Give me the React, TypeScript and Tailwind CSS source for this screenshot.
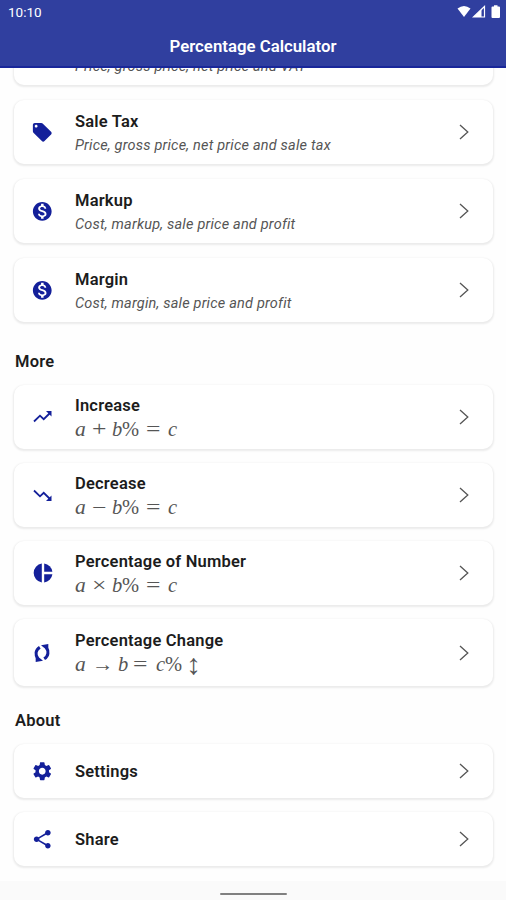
import React from 'react';
import { MdLocalOffer, MdMonetizationOn, MdSettings, MdShare } from 'react-icons/md';

type Token = { text: string; width: string; style?: string };

// Glyph slots of the formulas, one per symbol
const a: Token = { text: 'a', width: 'w-[17px]', style: 'italic scale-x-105' };
const binary = (sign: string): Token[] => [
  a,
  { text: sign, width: 'w-[20px]', style: 'scale-x-125' },
  { text: 'b', width: 'w-[10px]', style: 'italic' },
  { text: '%', width: 'w-[24px]' },
  { text: '=', width: 'w-[22px]', style: 'scale-x-125' },
  { text: 'c', width: 'w-[10px]', style: 'italic' },
];
const change: Token[] = [
  a,
  { text: '→', width: 'w-[26px]', style: 'scale-x-105' },
  { text: 'b', width: 'w-[15px]', style: 'italic' },
  { text: '=', width: 'w-[23px]', style: 'scale-x-125' },
  { text: 'c', width: 'w-[9px]', style: 'italic' },
  { text: '%', width: 'w-[21px]' },
  { text: '↕', width: 'w-[12px]', style: 'scale-y-140 scale-x-145' },
];

function Formula({ tokens }: { tokens: Token[] }) {
  return (
    <div className="flex h-[24px] font-['Liberation_Serif',serif] text-[20.5px] leading-[24px] text-[#555]">
      {tokens.map((t, i) => (
        <span key={i} className={`shrink-0 ${t.width}`}>
          <span className={`inline-block origin-left ${t.style ?? ''}`}>{t.text}</span>
        </span>
      ))}
    </div>
  );
}

function TrendIcon({ down = false }: { down?: boolean }) {
  return (
    <svg viewBox="0 0 22 22" className={`h-[22px] w-[22px] ${down ? '-scale-y-100' : ''}`}>
      <path d="M2 15.500L8 9.700L11.700 13.200L17.500 7.500" fill="none" stroke="currentColor" strokeWidth="1.800" />
      <path d="M14 5H19.500V10.500z" fill="currentColor" />
    </svg>
  );
}

function PieIcon() {
  return (
    <svg viewBox="0 0 22 22" className="h-[22px] w-[22px]" fill="currentColor">
      <path d="M9.800 1.600V20.400A9.500 9.500 0 0 1 9.800 1.600z" />
      <path d="M12.200 1.600A9.500 9.500 0 0 1 20.400 9.800H12.200z" />
      <path d="M12.200 12.200H20.400A9.500 9.500 0 0 1 12.200 20.400z" />
    </svg>
  );
}

function ChangeIcon() {
  return (
    <svg viewBox="0 0 22 22" className="mr-px h-[22px] w-[22px]">
      <g fill="none" stroke="currentColor" strokeWidth="3">
        <path d="M15.200 5.500C18 9 17.600 14 13.200 16.800" />
        <path d="M6.800 16.500C4 13 4.400 8 8.800 5.200" />
      </g>
      <g fill="currentColor">
        <path d="M10 3.200L17.300 2V9.300z" />
        <path d="M12 18.800L4.700 20V12.700z" />
      </g>
    </svg>
  );
}

function Chevron() {
  return (
    <svg viewBox="0 0 10 16" className="mr-[24px] h-4 w-[10px]" fill="none" stroke="#555" strokeWidth="1.3">
      <path d="M1 1L8.800 8L1 15" />
    </svg>
  );
}

type CardProps = {
  title: string;
  icon: React.ReactNode;
  height: string;
  hint?: string;
  tokens?: Token[];
};

function Card({ title, icon, height, hint, tokens }: CardProps) {
  return (
    <div
      className={`flex shrink-0 items-center rounded-[10px] bg-white shadow-[0_1px_2px_1px_rgba(0,0,0,0.08)] ${height}`}
    >
      <div className="flex w-[57px] justify-center text-[22.5px] text-[#14209a]">{icon}</div>
      <div className={`ml-[4px] flex-1 ${hint ? 'pt-[5px]' : 'pt-px'}`}>
        <div className="whitespace-nowrap text-[16.5px] font-semibold leading-[22px] tracking-[0.2px] text-[#1c1c1c]">
          {title}
        </div>
        {hint && (
          <div className="mt-px whitespace-nowrap text-[14.5px] italic leading-[24px] tracking-[0.2px] text-[#555]">
            {hint}
          </div>
        )}
        {tokens && <Formula tokens={tokens} />}
      </div>
      <Chevron />
    </div>
  );
}

function StatusIcons() {
  return (
    <svg viewBox="0 0 46 14" className="h-[14px] w-[46px]" fill="white">
      <path d="M1.500 3.500Q8-1.500 14.500 3.500L8 12z" />
      <path d="M28.500 1.500V12H17.500z" fill="none" stroke="white" strokeWidth="1.200" />
      <path d="M25.500 4.500V12H17.500z" />
      <path d="M36.500 1.500H38V.3h3.500v1.200H43a1 1 0 0 1 1 1V12a1 1 0 0 1-1 1h-6.500a1 1 0 0 1-1-1V2.500a1 1 0 0 1 1-1z" />
    </svg>
  );
}

export default function App() {
  return (
    <div className="flex h-[900px] w-[506px] flex-col overflow-hidden bg-[#fefefe] font-[Roboto,sans-serif]">
      <header className="flex h-[68px] shrink-0 flex-col border-b-2 border-[#19279a] bg-[#303f9f] text-white">
        <div className="flex h-[24px] items-center justify-between pl-[8px] pr-[4px] text-[13.5px]">
          <span>10:10</span>
          <StatusIcons />
        </div>
        <h1 className="mt-[10px] text-center text-[16.8px] font-semibold leading-[24px]">Percentage Calculator</h1>
      </header>

      <main className="flex min-h-0 flex-1 flex-col overflow-hidden pl-[14px] pr-[13px]">
        {/* Finance tools, scrolled so that the first card is cut by the header */}
        <section className="-mt-[47px] flex flex-col gap-[15px]">
          <Card title="VAT" icon={<MdLocalOffer />} height="h-[64px]" hint="Price, gross price, net price and VAT" />
          <Card title="Sale Tax" icon={<MdLocalOffer />} height="h-[64px]" hint="Price, gross price, net price and sale tax" />
          <Card title="Markup" icon={<MdMonetizationOn />} height="h-[64px]" hint="Cost, markup, sale price and profit" />
          <Card title="Margin" icon={<MdMonetizationOn />} height="h-[64px]" hint="Cost, margin, sale price and profit" />
        </section>

        <h2 className="mb-[12px] mt-[29px] pl-px text-[16.5px] font-semibold leading-[22px] tracking-[0.2px] text-[#1c1c1c]">
          More
        </h2>
        <section className="flex flex-col gap-[14px]">
          <Card title="Increase" icon={<TrendIcon />} height="h-[64px]" tokens={binary('+')} />
          <Card title="Decrease" icon={<TrendIcon down />} height="h-[64px]" tokens={binary('−')} />
          <Card title="Percentage of Number" icon={<PieIcon />} height="h-[64px]" tokens={binary('×')} />
          <Card title="Percentage Change" icon={<ChangeIcon />} height="h-[67px]" tokens={change} />
        </section>

        <h2 className="mb-[12px] mt-[24px] pl-px text-[16.5px] font-semibold leading-[22px] tracking-[0.2px] text-[#1c1c1c]">
          About
        </h2>
        <section className="flex flex-col gap-[14px]">
          <Card title="Settings" icon={<MdSettings />} height="h-[54px]" />
          <Card title="Share" icon={<MdShare />} height="h-[54px]" />
        </section>
      </main>

      <footer className="flex h-[19px] shrink-0 justify-center bg-[#fafafa] pt-[12px]">
        <div className="h-[2px] w-[67px] rounded-full bg-[#808080]" />
      </footer>
    </div>
  );
}
